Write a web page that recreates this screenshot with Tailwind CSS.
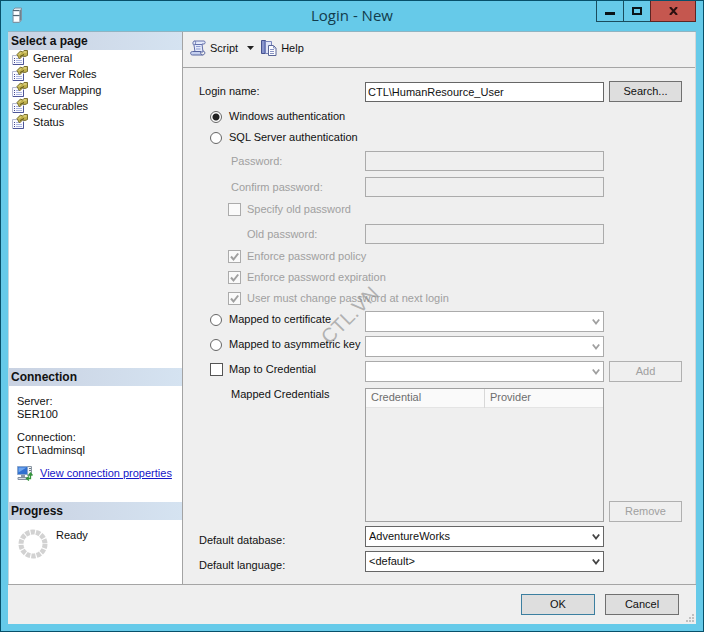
<!DOCTYPE html>
<html lang="en">
<head>
    <meta charset="utf-8">
    <meta name="viewport" content="width=device-width, initial-scale=1.0">
    <title>Login - New</title>
    <script src="https://cdn.jsdelivr.net/npm/@tailwindcss/browser@4"></script>
</head>
<body class="flex min-h-screen flex-col border border-[#07506a] bg-[#66cae9] px-[7px] pb-[7px] font-['Liberation_Sans',sans-serif] text-[11px] leading-[13px] text-[#111]">

    <!-- Shared icons -->
    <svg class="hidden" aria-hidden="true">
        <symbol id="page-icon" viewBox="0 0 16 16">
            <path d="M.5 5.500h11v9H.5z" fill="#fafaff" stroke="#b4b8d0"/>
            <path d="M1 14.500h10.500V8" fill="none" stroke="#4d5598"/>
            <path d="M2 8.500h1M2 10.500h1M2 12.500h1" stroke="#444a90"/>
            <path d="M4 8.500h3M4 10.500h6M4 12.500h6" stroke="#aab4e0"/>
            <path d="M5 4.500l3.500-3.500 2 1 1.500-1.500h3.500v5L13 6.500l-2.500-.5-3 3z" fill="#c0b14e" stroke="#7a7030"/>
            <path d="M7 4.500l2-2M11.500 2h3" stroke="#f0e8a0"/>
            <path d="M8 6.500l4-2" stroke="#5a5218"/>
        </symbol>
        <symbol id="chevron" viewBox="0 0 8 8">
            <path d="M.8 1.500L4 5.500l3.200-4" fill="none" stroke="currentColor" stroke-width="1.800"/>
        </symbol>
        <symbol id="tick" viewBox="0 0 13 13">
            <path d="M3 6.500l2.500 3L10.200 3.500" fill="none" stroke="currentColor" stroke-width="2"/>
        </symbol>
    </svg>

    <!-- Title bar -->
    <header class="grid h-[30px] grid-cols-[1fr_auto_1fr] items-start">
        <svg class="mt-[6px] ml-1 h-4 w-[11px]" viewBox="0 0 11 16" aria-hidden="true">
            <path d="M1 3l2-2h6.500v12l-2 2.500H1z" fill="#dfe7ee" stroke="#7e94a3"/>
            <path d="M9 2v11l-1.500 2V4z" fill="#71818c"/>
            <path d="M1 3.500h6.500M1 8.500h6.500" stroke="#526773"/>
            <path d="M2 5h5v2.500H2zM2 10h5v4H2z" fill="#fff"/>
        </svg>
        <h1 class="pt-1 font-['Open_Sans','Noto_Sans',sans-serif] text-[15px] leading-5 text-[#123c4c]">Login - New</h1>
        <div class="flex justify-end">
            <button type="button" aria-label="Minimize" class="flex h-[21px] w-7 items-center justify-center border border-t-0 border-[#1a4c5d]"><span class="mt-1 h-[3px] w-[10px] bg-[#0a1418]"></span></button>
            <button type="button" aria-label="Maximize" class="flex h-[21px] w-[26px] items-center justify-center border-b border-[#1a4c5d]"><span class="h-2 w-[10px] border-2 border-[#0a1418]"></span></button>
            <button type="button" aria-label="Close" class="flex h-[21px] w-[46px] items-center justify-center border border-t-0 border-[#5c2523] bg-[#c5574f]">
                <svg class="h-2 w-[9px]" viewBox="0 0 9 8" aria-hidden="true"><path d="M1 0l7 8M8 0L1 8" stroke="#2a1010" stroke-width="2"/></svg>
            </button>
        </div>
    </header>

    <div class="flex flex-1 flex-col border-t border-[#8fb4c2] bg-[#efefef]">
        <div class="flex flex-1">

            <!-- Left panel -->
            <aside class="flex w-[175px] shrink-0 flex-col border-x border-[#a3a3a3] border-l-[#c4d8e0] bg-white">
                <h2 class="h-[18px] bg-linear-to-r from-[#c9d2e2] to-[#d5e3f1] pl-[2px] text-[12px] font-bold leading-[18px]">Select a page</h2>
                <nav class="flex flex-1 flex-col pl-[3px]">
                    <a href="#" class="flex h-4 items-center gap-[5px]"><svg class="size-4"><use href="#page-icon"/></svg>General</a>
                    <a href="#" class="flex h-4 items-center gap-[5px]"><svg class="size-4"><use href="#page-icon"/></svg>Server Roles</a>
                    <a href="#" class="flex h-4 items-center gap-[5px]"><svg class="size-4"><use href="#page-icon"/></svg>User Mapping</a>
                    <a href="#" class="flex h-4 items-center gap-[5px]"><svg class="size-4"><use href="#page-icon"/></svg>Securables</a>
                    <a href="#" class="flex h-4 items-center gap-[5px]"><svg class="size-4"><use href="#page-icon"/></svg>Status</a>
                </nav>

                <h2 class="h-[18px] bg-linear-to-r from-[#c9d2e2] to-[#d5e3f1] pl-[2px] text-[12px] font-bold leading-[18px]">Connection</h2>
                <div class="h-[116px] pt-[9px] pl-2">
                    <p>Server:</p>
                    <p>SER100</p>
                    <p class="mt-[10px]">Connection:</p>
                    <p>CTL\adminsql</p>
                    <div class="mt-2 flex items-center gap-[7px]">
                        <svg class="h-4 w-4 shrink-0" viewBox="0 0 16 16" aria-hidden="true">
                            <path d="M10.500 1.500h4v9h-4z" fill="#eef1f5" stroke="#8c98a5"/>
                            <path d="M12 3.500h2M12 5.500h2" stroke="#6c7884"/>
                            <path d="M.5 1.500h10v8H.5z" fill="#2f6fd0" stroke="#8ba6cb"/>
                            <path d="M1.500 2.500h8l-8 5z" fill="#6fa5ec"/>
                            <path d="M4 10h4v2H4z" fill="#8a96a4"/>
                            <path d="M1 12.500h9v2H1z" fill="#d9dfe6" stroke="#8490a0"/>
                            <path d="M10 13.500h3.500V9M11.500 10.500l2-2.500 2 2.500M12 11.500l-2.500 2 2.500 2" fill="none" stroke="#34953c" stroke-width="1.300"/>
                        </svg>
                        <a href="#" class="whitespace-nowrap text-[#1515c8] underline">View connection properties</a>
                    </div>
                </div>

                <h2 class="h-[18px] bg-linear-to-r from-[#c9d2e2] to-[#d5e3f1] pl-[2px] text-[12px] font-bold leading-[18px]">Progress</h2>
                <div class="flex h-16 items-start gap-2 pt-[9px] pl-[9px]">
                    <svg class="size-[30px]" viewBox="0 0 30 30" aria-hidden="true">
                        <circle cx="15" cy="15" r="12" fill="none" stroke="#d2d2d2" stroke-width="5" stroke-dasharray="4.300 1.080"/>
                    </svg>
                    <p>Ready</p>
                </div>
            </aside>

            <!-- Right panel -->
            <main class="flex min-w-0 flex-1 flex-col border-r border-[#d6d6d6]">
                <div class="flex h-9 items-center border-b border-[#a5a5a5] pb-[3px] pl-[7px]">
                    <button type="button" class="flex items-center gap-1">
                        <svg class="size-4" viewBox="0 0 16 16" aria-hidden="true">
                            <path d="M4.500 1h9.500c1.500 0 1.500 3 0 3h-2l1 8H5L4 5C2.500 5 2.500 1 4.500 1z" fill="#e4eafb" stroke="#6471ab"/>
                            <path d="M4.500 1c1.500 0 1.500 3 0 3.500H12" fill="none" stroke="#6471ab"/>
                            <path d="M2.500 11.500h8.500c-1 1 0 3.500 1.500 3.500h-10C0 15 0 11.500 2.500 11.500z" fill="#c4cfee" stroke="#56649f"/>
                            <path d="M12.500 15c3 0 3-4 .5-4" fill="none" stroke="#56649f"/>
                            <path d="M6 6.500h4.500M6 9h4.500" stroke="#8d9bd0"/>
                        </svg>
                        Script
                    </button>
                    <button type="button" aria-label="Script options" class="ml-[9px] flex h-4 w-2 items-center"><svg class="h-1 w-[7px]" viewBox="0 0 7 4" aria-hidden="true"><path d="M0 0h7L3.500 4z" fill="#222"/></svg></button>
                    <button type="button" class="ml-[6px] flex items-center gap-1">
                        <svg class="size-4" viewBox="0 0 16 16" aria-hidden="true">
                            <path d="M.5.500h4v13h-4z" fill="#6876b8" stroke="#46528f"/>
                            <path d="M4.500 1.500h6v12h-6z" fill="#dfe4f8" stroke="#7884bb"/>
                            <path d="M2 1v12" stroke="#a8b3df"/>
                            <path d="M7.500 5.500h5l2.500 2.500v7.500H7.500z" fill="#fbfcff" stroke="#596596"/>
                            <path d="M12.500 5.500V8H15M9 9.500h4M9 11.500h4M9 13.500h4" fill="none" stroke="#8994c2"/>
                        </svg>
                        Help
                    </button>
                </div>

                <form class="relative flex flex-1 flex-col pt-[13px] pr-[13px] pb-3 pl-4">
                    <div class="grid h-[21px] grid-cols-[161px_1fr_73px] items-center gap-x-[5px]">
                        <label for="login">Login name:</label>
                        <input id="login" type="text" value="CTL\HumanResource_User" class="h-5 w-full min-w-0 border border-[#666] bg-white px-[2px]">
                        <button type="button" class="h-[21px] border border-[#707070] bg-[#dedede]">Search...</button>
                    </div>

                    <label class="mt-1 flex h-[21px] items-center gap-[7px] pl-[11px]"><input type="radio" name="auth" checked class="size-3 shrink-0 appearance-none rounded-full border border-[#666] bg-white checked:bg-[radial-gradient(circle,#222_0_3px,transparent_4px)]">Windows authentication</label>
                    <label class="flex h-[21px] items-center gap-[7px] pl-[11px]"><input type="radio" name="auth" class="size-3 shrink-0 appearance-none rounded-full border border-[#666] bg-white checked:bg-[radial-gradient(circle,#222_0_3px,transparent_4px)]">SQL Server authentication</label>

                    <div class="mt-[3px] grid h-5 grid-cols-[161px_1fr_73px] items-center gap-x-[5px] text-[#a0a0a0]">
                        <label for="password" class="pl-8">Password:</label>
                        <input id="password" type="password" disabled class="h-5 w-full min-w-0 border border-[#ababab] px-[2px]">
                    </div>
                    <div class="mt-[6px] grid h-5 grid-cols-[161px_1fr_73px] items-center gap-x-[5px] text-[#a0a0a0]">
                        <label for="confirm" class="pl-8">Confirm password:</label>
                        <input id="confirm" type="password" disabled class="h-5 w-full min-w-0 border border-[#ababab] px-[2px]">
                    </div>
                    <label class="mt-[2px] flex h-[21px] items-center gap-[6px] pl-[29px] text-[#a0a0a0]"><input type="checkbox" disabled class="size-[13px] shrink-0 appearance-none border border-[#ababab] bg-[#fafafa]">Specify old password</label>
                    <div class="mt-1 grid h-5 grid-cols-[161px_1fr_73px] items-center gap-x-[5px] text-[#a0a0a0]">
                        <label for="old" class="pl-12">Old password:</label>
                        <input id="old" type="password" disabled class="h-5 w-full min-w-0 border border-[#ababab] px-[2px]">
                    </div>
                    <label class="mt-[2px] flex h-[21px] items-center gap-[6px] pl-[29px] text-[#a0a0a0]">
                        <span class="grid size-[13px] shrink-0"><input type="checkbox" checked disabled class="peer col-start-1 row-start-1 size-[13px] appearance-none border border-[#ababab] bg-[#fafafa]"><svg class="col-start-1 row-start-1 hidden size-[13px] peer-checked:block"><use href="#tick"/></svg></span>
                        Enforce password policy
                    </label>
                    <label class="flex h-[21px] items-center gap-[6px] pl-[29px] text-[#a0a0a0]">
                        <span class="grid size-[13px] shrink-0"><input type="checkbox" checked disabled class="peer col-start-1 row-start-1 size-[13px] appearance-none border border-[#ababab] bg-[#fafafa]"><svg class="col-start-1 row-start-1 hidden size-[13px] peer-checked:block"><use href="#tick"/></svg></span>
                        Enforce password expiration
                    </label>
                    <label class="flex h-[21px] items-center gap-[6px] pl-[29px] text-[#a0a0a0]">
                        <span class="grid size-[13px] shrink-0"><input type="checkbox" checked disabled class="peer col-start-1 row-start-1 size-[13px] appearance-none border border-[#ababab] bg-[#fafafa]"><svg class="col-start-1 row-start-1 hidden size-[13px] peer-checked:block"><use href="#tick"/></svg></span>
                        User must change password at next login
                    </label>

                    <div class="mt-[2px] grid h-[21px] grid-cols-[161px_1fr_73px] items-center gap-x-[5px]">
                        <label class="flex items-center gap-[7px] pb-1 pl-[11px] whitespace-nowrap"><input type="radio" name="auth" class="size-3 shrink-0 appearance-none rounded-full border border-[#666] bg-white checked:bg-[radial-gradient(circle,#222_0_3px,transparent_4px)]">Mapped to certificate</label>
                        <div class="relative text-[#a0a0a0]">
                            <select aria-label="Certificate" disabled class="block h-[21px] w-full appearance-none border border-[#ababab] bg-white px-[3px]"></select>
                            <svg class="pointer-events-none absolute top-[7px] right-1 size-2"><use href="#chevron"/></svg>
                        </div>
                    </div>
                    <div class="mt-1 grid h-[21px] grid-cols-[161px_1fr_73px] items-center gap-x-[5px]">
                        <label class="flex items-center gap-[7px] pb-1 pl-[11px] whitespace-nowrap"><input type="radio" name="auth" class="size-3 shrink-0 appearance-none rounded-full border border-[#666] bg-white checked:bg-[radial-gradient(circle,#222_0_3px,transparent_4px)]">Mapped to asymmetric key</label>
                        <div class="relative text-[#a0a0a0]">
                            <select aria-label="Asymmetric key" disabled class="block h-[21px] w-full appearance-none border border-[#ababab] bg-white px-[3px]"></select>
                            <svg class="pointer-events-none absolute top-[7px] right-1 size-2"><use href="#chevron"/></svg>
                        </div>
                    </div>
                    <div class="mt-1 grid h-[21px] grid-cols-[161px_1fr_73px] items-center gap-x-[5px]">
                        <label class="flex items-center gap-[6px] pl-[11px] pb-1 whitespace-nowrap"><input type="checkbox" class="size-[13px] shrink-0 appearance-none border border-[#555] bg-white checked:bg-[#555]">Map to Credential</label>
                        <div class="relative text-[#a0a0a0]">
                            <select aria-label="Credential" disabled class="block h-[21px] w-full appearance-none border border-[#ababab] bg-white px-[3px]"></select>
                            <svg class="pointer-events-none absolute top-[7px] right-1 size-2"><use href="#chevron"/></svg>
                        </div>
                        <button type="button" disabled class="h-[21px] border border-[#b0b0b0] text-[#a0a0a0]">Add</button>
                    </div>

                    <!-- Mapped credentials list -->
                    <div class="mt-[6px] grid min-h-[134px] flex-1 grid-cols-[161px_1fr_73px] gap-x-[5px]">
                        <p id="mapped-label" class="pl-8">Mapped Credentials</p>
                        <div class="border border-[#a0a0a0]">
                            <table aria-labelledby="mapped-label" class="w-full table-fixed bg-[#fafafa] text-[#6d6d6d]">
                                <thead>
                                    <tr class="h-[18px] border-b border-[#e4e4e4] text-left">
                                        <th class="w-1/2 border-r border-[#d8d8d8] pl-[5px] font-normal">Credential</th>
                                        <th class="pl-[5px] font-normal">Provider</th>
                                    </tr>
                                </thead>
                            </table>
                        </div>
                        <button type="button" disabled class="h-[21px] self-end border border-[#b0b0b0] text-[#a0a0a0]">Remove</button>
                    </div>

                    <div class="mt-1 grid h-[21px] grid-cols-[161px_1fr_73px] items-center gap-x-[5px]">
                        <label for="database" class="pt-2">Default database:</label>
                        <div class="relative text-[#111]">
                            <select id="database" class="block h-[21px] w-full appearance-none border border-[#666] bg-white px-[3px]"><option>AdventureWorks</option></select>
                            <svg class="pointer-events-none absolute top-[7px] right-1 size-2 text-[#444]"><use href="#chevron"/></svg>
                        </div>
                    </div>
                    <div class="mt-1 grid h-[21px] grid-cols-[161px_1fr_73px] items-center gap-x-[5px]">
                        <label for="language" class="pt-2">Default language:</label>
                        <div class="relative text-[#111]">
                            <select id="language" class="block h-[21px] w-full appearance-none border border-[#666] bg-white px-[3px]"><option>&lt;default&gt;</option></select>
                            <svg class="pointer-events-none absolute top-[7px] right-1 size-2 text-[#444]"><use href="#chevron"/></svg>
                        </div>
                    </div>

                    <!-- Watermark -->
                    <span class="pointer-events-none absolute top-[237px] left-[131px] -rotate-45 text-[20px] leading-5 text-[#888]/60">CTL.VN</span>
                </form>
            </main>
        </div>

        <!-- Dialog buttons -->
        <footer class="relative flex h-10 items-center justify-end gap-[10px] border-t border-[#a5a5a5] pr-[17px]">
            <button type="submit" class="h-[21px] w-[74px] border border-[#3c7fa0] bg-[#dedede]">OK</button>
            <button type="button" class="h-[21px] w-[74px] border border-[#707070] bg-[#dedede]">Cancel</button>
            <svg class="absolute right-[2px] bottom-[2px] size-2" viewBox="0 0 8 8" aria-hidden="true"><path d="M6 0h2v2H6zM3 3h2v2H3zM6 3h2v2H6zM0 6h2v2H0zM3 6h2v2H3zM6 6h2v2H6z" fill="#c0c0c0"/></svg>
        </footer>
    </div>
</body>
</html>
